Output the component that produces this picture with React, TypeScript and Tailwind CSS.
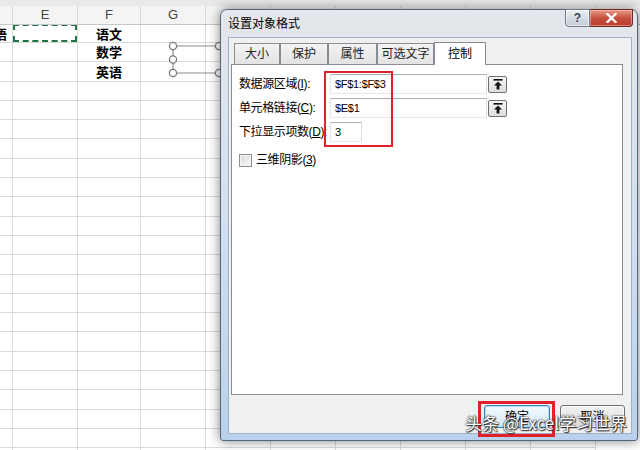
import React from "react";

const COLS = ["w-[13px]", "w-[65px]", "w-[63px]", "w-[65px]", "w-[65px]", "w-[65px]", "w-[65px]", "w-[65px]", "w-[65px]", "w-[65px]"];

const cells: Record<string, string> = {
  "0-2": "语文",
  "1-2": "数学",
  "2-2": "英语",
};

// little up-arrow on the range picker buttons
const PickIcon = () => (
  <svg width="10" height="11" viewBox="0 0 10 11">
    <rect x="0.5" y="0" width="9" height="1.6" fill="#111" />
    <path d="M5 2.6 L9 6.6 L6.4 6.6 L6.4 10.5 L3.6 10.5 L3.6 6.6 L1 6.6 Z" fill="#111" />
  </svg>
);

const Field = ({ value, width, picker }: { value: string; width: string; picker?: boolean }) => (
  <div className="flex items-center">
    <div className={`${width} h-[20px] border border-[#abadb3] border-l-[#e2e3ea] border-b-[#e3e9ef] border-r-[#dbdfe6] bg-white flex items-center pl-[4px] text-[11px] tracking-[-0.3px] text-black`}>
      {value}
    </div>
    {picker && (
      <div className="ml-[1px] w-[19px] h-[17px] rounded-[2px] border border-[#707070] bg-gradient-to-b from-[#f6f6f6] to-[#dddddd] flex items-center justify-center">
        <PickIcon />
      </div>
    )}
  </div>
);

const Tab = ({ label, width, active }: { label: string; width: string; active?: boolean }) =>
  active ? (
    <div className={`${width} h-[23px] -mb-px z-10 border border-b-0 border-[#898c95] bg-white flex items-center justify-center text-[12px]`}>
      {label}
    </div>
  ) : (
    <div className={`${width} h-[21px] mt-[1px] border border-b-0 border-[#898c95] bg-gradient-to-b from-[#f3f3f3] to-[#e3e3e3] flex items-center justify-center text-[12px] text-[#222]`}>
      {label}
    </div>
  );

function Sheet() {
  return (
    <div className="flex flex-col w-full h-full bg-white font-['Liberation_Sans','Noto_Sans_CJK_SC',sans-serif]">
      {/* top strip + column header */}
      <div className="h-[6px] shrink-0 bg-[#e9e9e9]" />
      <div className="h-[19px] shrink-0 flex bg-[#f4f4f4] border-b border-[#c6c6c6]">
        {COLS.map((w, i) => (
          <div key={i} className={`${w} shrink-0 border-r border-[#d6d6d6] flex items-center justify-center text-[13px] text-[#444]`}>
            {i === 1 ? "E" : i === 2 ? "F" : i === 3 ? "G" : ""}
          </div>
        ))}
      </div>
      {Array.from({ length: 24 }).map((_, r) => (
        <div key={r} className={`${r === 0 ? "h-[18px]" : "h-[19.3px]"} flex shrink-0`}>
          {COLS.map((w, c) => (
            <div key={c} className={`${w} shrink-0 border-r border-b border-[#dadada] flex items-center justify-center overflow-hidden relative`}>
              {r === 0 && c === 0 && (
                <span className="absolute right-[5px] text-[13px] font-bold text-black font-['Noto_Sans_CJK_SC',sans-serif]">语</span>
              )}
              {r === 0 && c === 1 && (
                <div className="absolute inset-0 -top-px border-2 border-dashed border-[#217346]" />
              )}
              {cells[`${r}-${c}`] && (
                <span className="text-[13px] font-bold text-black font-['Noto_Sans_CJK_SC',sans-serif]">{cells[`${r}-${c}`]}</span>
              )}
            </div>
          ))}
        </div>
      ))}
    </div>
  );
}

export default function App() {
  return (
    <div className="relative w-[640px] h-[450px] overflow-hidden bg-white">
      <Sheet />

      {/* selected combo box handles */}
      <svg className="absolute left-[165px] top-[38px]" width="70" height="44" viewBox="165 38 70 44">
        <path d="M173 46 H230 M173 73 H230 M173 46 V73" stroke="#8a8a8a" strokeWidth="1.2" fill="none" />
        {[
          [173, 46],
          [173, 59.5],
          [173, 73],
          [219, 46],
          [219, 73],
        ].map(([x, y], i) => (
          <circle key={i} cx={x} cy={y} r="3.6" fill="#fff" stroke="#7a7a7a" strokeWidth="1.3" />
        ))}
      </svg>

      {/* dialog window */}
      <div className="absolute left-[220px] top-[9px] w-[418px] h-[432px] rounded-t-[7px] rounded-b-[3px] border border-[#56667a] bg-gradient-to-b from-[#e4e7eb] via-[#d2dff0] to-[#b9d1ec] shadow-[0_0_12px_rgba(0,0,0,0.5)] flex flex-col font-['Liberation_Sans','Noto_Sans_CJK_SC',sans-serif] text-black">
        {/* title bar */}
        <div className="h-[27px] flex items-start shrink-0">
          <span className="ml-[7px] mt-[5px] text-[12px] text-black">设置对象格式</span>
          <div className="ml-auto mr-[4px] flex -mt-px">
            <div className="w-[25px] h-[18px] rounded-bl-[4px] border border-[#6f7c8c] bg-gradient-to-b from-[#eef1f4] via-[#d6dce3] to-[#c3cbd5] flex items-center justify-center text-[12px] font-bold text-[#3b4654] shadow-[inset_0_0_0_1px_rgba(255,255,255,0.6)]">
              ?
            </div>
            <div className="w-[43px] h-[18px] rounded-br-[4px] border border-l-0 border-[#6d2b24] bg-gradient-to-b from-[#e49b89] via-[#c8503f] to-[#b73a2a] flex items-center justify-center shadow-[inset_0_0_0_1px_rgba(255,200,190,0.5)]">
              <svg width="11" height="10" viewBox="0 0 11 10">
                <path d="M1.5 1 L9.5 9 M9.5 1 L1.5 9" stroke="#fff" strokeWidth="2.4" strokeLinecap="square" />
              </svg>
            </div>
          </div>
        </div>

        {/* client area */}
        <div className="ml-[7px] mr-[5px] mb-[6px] flex-1 border border-[#9fb1c6] bg-[#f0f0f0] relative flex flex-col">
          {/* tabs */}
          <div className="flex items-start ml-[5px] mt-[4px] h-[22px]">
            <Tab label="大小" width="w-[46px]" />
            <Tab label="保护" width="w-[48px]" />
            <Tab label="属性" width="w-[49px]" />
            <Tab label="可选文字" width="w-[57px]" />
            <Tab label="控制" width="w-[52px]" active />
          </div>

          {/* tab panel */}
          <div className="ml-[2px] w-[392px] h-[331px] border border-[#898c95] bg-white relative">
            <div className="pl-[7px] pt-[9px] flex flex-col gap-[4px] text-[12px] tracking-[-0.4px]">
              <div className="flex items-center h-[20px]">
                <span className="w-[91px] whitespace-nowrap">数据源区域(<u>I</u>):</span>
                <Field value="$F$1:$F$3" width="w-[157px]" picker />
              </div>
              <div className="flex items-center h-[20px]">
                <span className="w-[91px] whitespace-nowrap">单元格链接(<u>C</u>):</span>
                <Field value="$E$1" width="w-[157px]" picker />
              </div>
              <div className="flex items-center h-[20px]">
                <span className="w-[91px] whitespace-nowrap">下拉显示项数(<u>D</u>):</span>
                <Field value="3" width="w-[32px]" />
              </div>
              <div className="flex items-center h-[16px] mt-[6px]">
                <div className="w-[13px] h-[13px] border border-[#8e8f8f] bg-gradient-to-br from-[#d9d9d9] to-[#f9f9f9] shadow-[inset_0_0_0_1px_#f4f4f4]" />
                <span className="ml-[4px]">三维阴影(<u>3</u>)</span>
              </div>
            </div>
            {/* red annotation box */}
            <div className="absolute left-[92px] top-[6px] w-[69px] h-[76px] border-2 border-[#e0212b]" />
          </div>

          {/* dialog buttons */}
          <div className="flex justify-end gap-[10px] mr-[6px] mt-[10px]">
            <div className="w-[66px] h-[23px] rounded-[3px] border border-[#3c7fb1] bg-gradient-to-b from-[#f2f9fd] to-[#d4e8f7] shadow-[inset_0_0_0_1px_#aee0f9] flex items-center justify-center text-[12px]">
              确定
            </div>
            <div className="w-[65px] h-[23px] rounded-[3px] border border-[#707070] bg-gradient-to-b from-[#f2f2f2] to-[#dcdcdc] shadow-[inset_0_0_0_1px_#fbfbfb] flex items-center justify-center text-[12px]">
              取消
            </div>
          </div>

          {/* red annotation around OK */}
          <div className="absolute left-[249px] top-[363px] w-[77px] h-[36px] border-[3px] border-[#e0212b]" />
        </div>
      </div>

      {/* watermark */}
      <div className="absolute left-[465px] top-[412px] text-[17px] leading-[22px] text-white whitespace-nowrap font-['Noto_Sans_CJK_SC',sans-serif] [text-shadow:0_0_2px_#222,0_0_1px_#222,1px_1px_1px_#333]">
        头条 @Excel学习世界
      </div>
    </div>
  );
}
